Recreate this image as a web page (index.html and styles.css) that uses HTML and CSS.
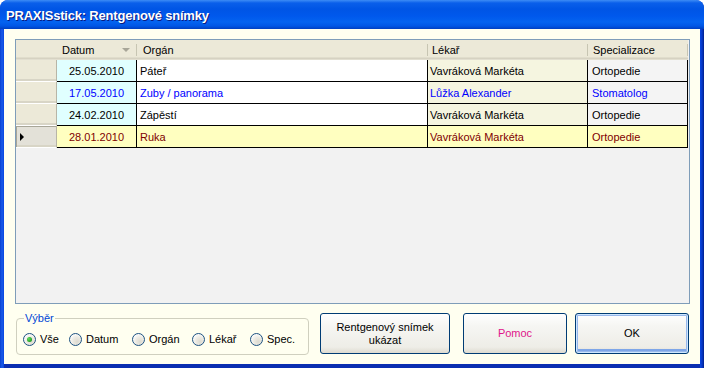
FILE: index.html
```html
<!DOCTYPE html>
<html>
<head>
<meta charset="utf-8">
<link rel="stylesheet" href="styles.css">
</head>
<body>
<div class="window">
  <div class="titlebar"><span class="title">PRAXISstick: Rentgenové snímky</span></div>
  <div class="client">
    <div class="grid">
      <div class="row head">
        <div class="rh"></div>
        <div class="c datum">Datum<span class="sort"></span></div>
        <div class="c organ">Orgán</div>
        <div class="c lekar">Lékař</div>
        <div class="c spec">Specializace</div>
      </div>
      <div class="row">
        <div class="rh"></div>
        <div class="c datum">25.05.2010</div>
        <div class="c organ">Páteř</div>
        <div class="c lekar">Vavráková Markéta</div>
        <div class="c spec">Ortopedie</div>
      </div>
      <div class="row blue">
        <div class="rh"></div>
        <div class="c datum">17.05.2010</div>
        <div class="c organ">Zuby / panorama</div>
        <div class="c lekar">Lůžka Alexander</div>
        <div class="c spec">Stomatolog</div>
      </div>
      <div class="row">
        <div class="rh"></div>
        <div class="c datum">24.02.2010</div>
        <div class="c organ">Zápěstí</div>
        <div class="c lekar">Vavráková Markéta</div>
        <div class="c spec">Ortopedie</div>
      </div>
      <div class="row sel">
        <div class="rh"><span class="cur"></span></div>
        <div class="c datum">28.01.2010</div>
        <div class="c organ">Ruka</div>
        <div class="c lekar">Vavráková Markéta</div>
        <div class="c spec">Ortopedie</div>
      </div>
    </div>
    <div class="bottom">
      <fieldset class="group">
        <legend>Výběr</legend>
        <label class="opt o1"><span class="radio checked"></span>Vše</label>
        <label class="opt o2"><span class="radio"></span>Datum</label>
        <label class="opt o3"><span class="radio"></span>Orgán</label>
        <label class="opt o4"><span class="radio"></span>Lékař</label>
        <label class="opt o5"><span class="radio"></span>Spec.</label>
      </fieldset>
      <button class="btn b1">Rentgenový snímek<br>ukázat</button>
      <button class="btn b2">Pomoc</button>
      <button class="btn b3 default">OK</button>
    </div>
  </div>
</div>
</body>
</html>
```
FILE: styles.css
```css
* { box-sizing: border-box; }
html, body { margin: 0; padding: 0; }
body { width: 704px; height: 368px; overflow: hidden; background: #fff; font-family: "Liberation Sans", Arial, sans-serif; font-size: 11px; }

.window {
  width: 704px; height: 368px;
  display: flex; flex-direction: column;
  background: linear-gradient(to right, #0840d0 0, #1a5ae8 2px, #0846e0 4px, #0846e0 700px, #0638c8 702px, #00208c 704px);
  border-radius: 8px 8px 0 0;
  overflow: hidden;
}
.titlebar {
  height: 29px; flex: none;
  background: linear-gradient(to bottom, #3d8cf5 0, #0a5fea 3px, #0055e5 9px, #0058ec 16px, #0463f0 22px, #0056e6 26px, #003fc0 29px);
  display: flex; align-items: center; padding-left: 6px; padding-top: 2px;
}
.title {
  color: #fff; font-weight: bold; font-size: 13px;
  font-family: "Liberation Sans", Arial, sans-serif;
  text-shadow: 1px 1px 0 #0a1a80;
  letter-spacing: -0.2px;
}
.client {
  flex: 1;
  margin: 0 4px 4px 4px;
  background: #fffff0;
  padding: 10px 11px 0 11px;
  box-shadow: 0 4px 0 #0a2eb0;
}

.grid {
  width: 675px; height: 265px;
  border: 1px solid #7f9db9;
  background: #f2f2f2;
}
.row { display: flex; height: 22px; }
.row .rh {
  width: 41px; flex: none;
  background: #ece9d8;
  border-right: 1px solid #b8b5a6;
  border-bottom: 1px solid #fff;
  box-shadow: inset 0 -2px 0 #d8d5c6;
  display: flex; align-items: center; padding-left: 4px;
}
.row .c {
  border-right: 1px solid #000;
  border-bottom: 1px solid #000;
  display: flex; align-items: center;
  white-space: nowrap; overflow: hidden;
  color: #000;
}
.c.datum { width: 80px; justify-content: center; background: #e0ffff; }
.c.organ { width: 291px; padding-left: 3px; background: #fff; }
.c.lekar { width: 160px; padding-left: 2px; background: #f5f5e0; }
.c.spec { width: 100px; padding-left: 4px; background: #f4f4f4; }

.row.head { height: 20px; }
.row.head .rh, .row.head .c {
  background: #ece9d8;
  border-bottom: none;
  box-shadow: inset 0 -1px 0 #e2dfd0, inset 0 -2px 0 #d6d2c2, inset 0 -3px 0 #e0ddcc;
}
.row.head .rh { border-right: none; }
.row.head .c { border-right: none; position: relative; justify-content: flex-start; }
.row.head .c::after {
  content: ""; position: absolute; right: 0; top: 4px; height: 12px; width: 1px;
  background: #c7c5b2; box-shadow: 1px 0 0 #fff;
}
.row.head .c.datum { padding-left: 5px; }
.row.head .c.organ { padding-left: 6px; width: 291px; }
.row.head .c.lekar { padding-left: 4px; }
.row.head .c.spec { padding-left: 5px; }
.sort {
  position: absolute; left: 65px; top: 8px;
  width: 0; height: 0;
  border-left: 4px solid transparent; border-right: 4px solid transparent;
  border-top: 4px solid #a8a698;
}

.row.blue .c { color: #0000ff; }
.row.sel .c { color: #800000; background: #ffffc0; }
.row.sel .rh { background: #e3e1d8; box-shadow: inset 1px 1px 0 #a8a698, inset 0 -2px 0 #d8d5c6; }
.cur {
  width: 0; height: 0;
  border-top: 4px solid transparent; border-bottom: 4px solid transparent;
  border-left: 4px solid #000;
}

.bottom { display: flex; margin-top: 9px; align-items: flex-start; }
.group {
  margin: 0 0 0 1px; width: 293px; height: 43px;
  border: 1px solid #d0d0bf; border-radius: 4px;
  padding: 0 0 0 6px;
  display: flex; align-items: center;
  position: relative; top: -1px;
}
.group legend {
  color: #0046d5; padding: 0 1px; margin-left: 1px;
  font-size: 11px; line-height: 13px;
}
.opt { display: flex; align-items: center; flex: none; color: #000; margin-top: -1px; }
.o1 { width: 46px; }
.o2 { width: 63px; }
.o3 { width: 60px; }
.o4 { width: 58px; }
.o5 { width: 50px; }
.radio {
  width: 13px; height: 13px; border-radius: 50%;
  border: 1px solid #1c5180;
  background: radial-gradient(circle at 65% 70%, #dcdad0 0, #eceae2 40%, #fbfbfa 75%);
  margin-right: 4px; flex: none;
  display: flex; align-items: center; justify-content: center;
}
.radio.checked::after {
  content: ""; width: 5px; height: 5px; border-radius: 50%;
  background: radial-gradient(circle at 35% 35%, #5fdc5f, #21a121 70%);
}

.btn {
  font-family: "Liberation Sans", Arial, sans-serif; font-size: 11px;
  height: 41px; padding: 0; margin: 0;
  border: 1px solid #003c74; border-radius: 3px;
  background: linear-gradient(to bottom, #fff 0, #f6f6f3 30%, #eeede7 85%, #dedbd0 100%);
  color: #000; line-height: 13px;
}
.b1 { width: 130px; margin-left: 11px; }
.b2 { width: 104px; margin-left: 13px; color: #e0158a; }
.b3 { width: 114px; margin-left: 8px; }
.btn.default {
  box-shadow: inset 0 0 0 1px #cee7ff, inset 0 0 0 2px #98b8ea, inset 0 -2px 0 2px #7ea6e8;
}
```
